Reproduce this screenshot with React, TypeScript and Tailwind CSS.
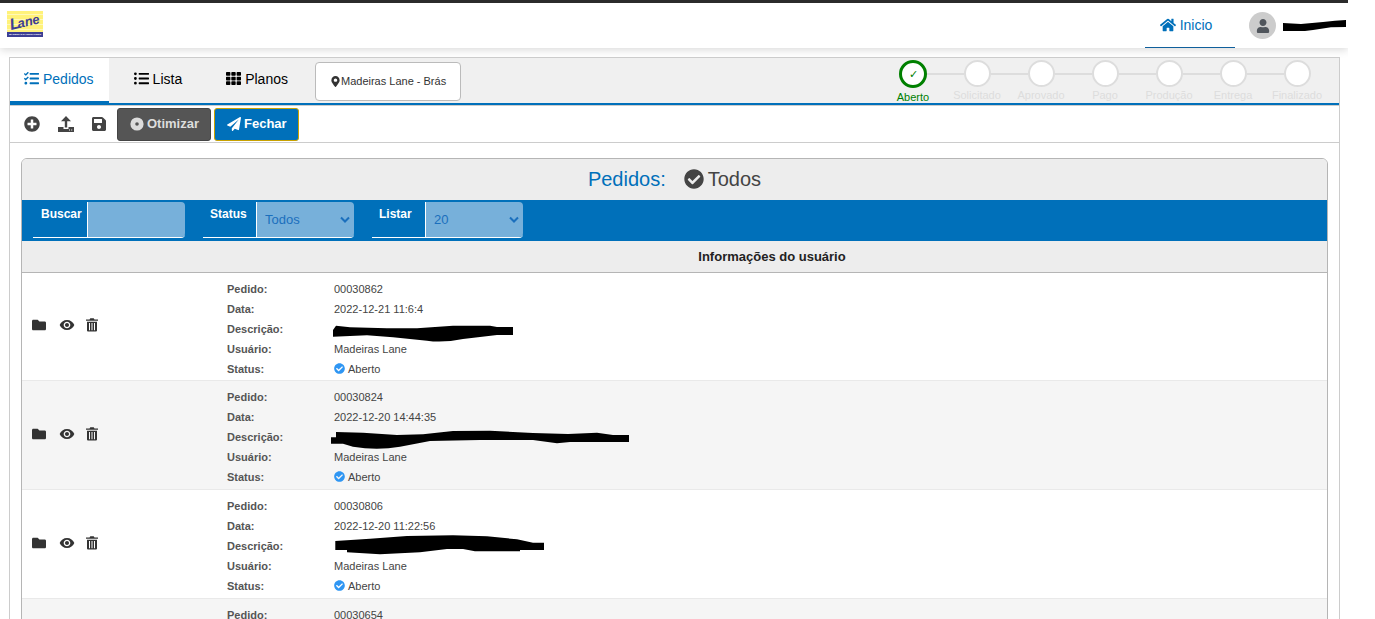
import type { ReactNode } from "react";
import {
  FaCheckCircle,
  FaFolder,
  FaHome,
  FaListUl,
  FaMapMarkerAlt,
  FaPaperPlane,
  FaPlusCircle,
  FaSave,
  FaTasks,
  FaTh,
  FaUser,
} from "react-icons/fa";
import { MdRemoveRedEye } from "react-icons/md";

type Order = {
  id: string;
  date: string;
  user: string;
  status: string;
  // outline of the ink stroke that hides the description
  ink: string;
};

const orders: Order[] = [
  {
    id: "00030862",
    date: "2022-12-21 11:6:4",
    user: "Madeiras Lane",
    status: "Aberto",
    ink: "M-1 11L2 6.7L16 8.3L53 9.3L83 9.3L119 6.7L156 6.7L163 8H179V16H163L129 20Q109 24 93 21.7L59 18.3L33 16.3L-1 17.7Z",
  },
  {
    id: "00030824",
    date: "2022-12-20 14:44:35",
    user: "Madeiras Lane",
    status: "Aberto",
    ink: "M-3 10.3H2V5L29 5.7L63 8L89 7.3L119 4L156 3.7L199 6L234 7L263 5.7L279 8H295V15H236L223 16.3L199 13H146L96 14L66 19.7Q43 24 19 19.7L9 16.7H-3Z",
  },
  {
    id: "00030806",
    date: "2022-12-20 11:22:56",
    user: "Madeiras Lane",
    status: "Aberto",
    ink: "M1.3 14V5L36 2.7L73 0L119 -0.7L153 0.3L183 3.3L199 6.7H210V14H186V15.3H141L129 13H113L86 16.3L46 18.3L13 16.3V14Z",
  },
  {
    id: "00030654",
    date: "2022-12-19 16:20:11",
    user: "Madeiras Lane",
    status: "Aberto",
    ink: "M0 6L60 4L180 6V14L60 17L0 15Z",
  },
];

const steps = ["Aberto", "Solicitado", "Aprovado", "Pago", "Produção", "Entrega", "Finalizado"];

function Logo() {
  return (
    <svg width="36" height="26" viewBox="0 0 36 26" role="img" aria-label="Lane" className="mb-[3px]">
      <rect width="36" height="26" fill="#fff27a" />
      <path d="M0 3.5H36M0 8.5H36M0 13.5H36M0 18.5H36" stroke="#fff9b8" strokeWidth="1" />
      <rect y="21" width="36" height="5" fill="#3d3f94" />
      <text
        x="4"
        y="19"
        transform="rotate(-13 4 19)"
        fill="#3d3f94"
        fontFamily="Liberation Sans Narrow, Liberation Sans, sans-serif"
        fontSize="13"
        fontWeight="700"
        fontStyle="italic"
      >
        <tspan fontSize="16">L</tspan>
        <tspan dx="-2">a</tspan>
        <tspan>ne</tspan>
      </text>
      <text x="2" y="24.4" fill="#fff" fontFamily="Liberation Sans, sans-serif" fontSize="2.5" fontWeight="700">
        MADEIRAS E FERRAGENS
      </text>
    </svg>
  );
}

function UploadIcon() {
  return (
    <svg width="16" height="16" viewBox="0 0 16 16" fill="currentColor" aria-hidden="true">
      <path d="M8 0L13 5.2H9.2V11.5H6.8V5.2H3Z" />
      <path
        fillRule="evenodd"
        d="M0 11H5.5V13H10.5V11H16V16H0ZM11 13.6V14.6H12V13.6ZM13.2 13.6V14.6H14.2V13.6Z"
      />
    </svg>
  );
}

function DiscIcon() {
  return (
    <svg width="14" height="14" viewBox="0 0 14 14" aria-hidden="true">
      <circle cx="7" cy="7" r="6.6" fill="#ddd" />
      <circle cx="7" cy="7" r="1.8" fill="#555" />
    </svg>
  );
}

function TrashIcon() {
  return (
    <svg width="12" height="14" viewBox="0 0 12 14" fill="currentColor" aria-hidden="true">
      <path d="M0 1.5H3.5L4.3 0.3H7.7L8.5 1.5H12V2.8H0Z" />
      <path
        fillRule="evenodd"
        d="M1 3.8H11V12.6Q11 13.6 10 13.6H2Q1 13.6 1 12.6ZM3 5V12.2H4V5ZM5.5 5V12.2H6.5V5ZM8 5V12.2H9V5Z"
      />
    </svg>
  );
}

function Tab({ icon, label, active = false }: { icon: ReactNode; label: string; active?: boolean }) {
  return (
    <button
      className={
        active
          ? "flex h-[47px] items-center gap-1 border-b-4 border-[#0070ba] bg-white pr-[15px] pb-0.5 pl-3.5 text-sm text-[#0070ba]"
          : "flex h-[47px] items-center gap-1 border-b-4 border-transparent px-3.5 pb-0.5 text-sm text-black"
      }
    >
      {icon}
      {label}
    </button>
  );
}

function Stepper() {
  return (
    <ol className="mr-2.5 flex pt-0.5 text-[11px]">
      {steps.map((step, i) => (
        <li key={step} className="w-16">
          <div className="flex items-center">
            <span className={i === 0 ? "h-0.5 flex-1" : "h-0.5 flex-1 bg-[#ddd]"} />
            {i === 0 ? (
              <span className="flex size-7 items-center justify-center rounded-full border-3 border-[#008000] bg-white text-[#008000]">
                ✓
              </span>
            ) : (
              <span className="size-[27px] rounded-full border-2 border-[#ddd] bg-white" />
            )}
            <span className={i === steps.length - 1 ? "h-0.5 flex-1" : "h-0.5 flex-1 bg-[#ddd]"} />
          </div>
          <p className={i === 0 ? "text-center leading-4.5 text-[#008000]" : "text-center leading-4 text-[#ddd]"}>
            {step}
          </p>
        </li>
      ))}
    </ol>
  );
}

function FilterSelect({ id, label, value }: { id: string; label: string; value: string }) {
  return (
    <div className="flex h-9 w-[151px] rounded-r border-b border-white">
      <label htmlFor={id} className="w-[53px] pl-[7px] text-xs leading-6 font-bold text-white">
        {label}
      </label>
      <div className="relative flex-1">
        <select
          id={id}
          defaultValue={value}
          className="h-full w-full appearance-none rounded-r border-l border-white bg-[#77b0da] pl-2 text-[13px] text-[#1b6fbd]"
        >
          <option>{value}</option>
        </select>
        <svg
          className="pointer-events-none absolute top-3.5 right-1"
          width="10"
          height="8"
          viewBox="0 0 10 8"
          fill="none"
          stroke="#1b6fbd"
          strokeWidth="2"
          aria-hidden="true"
        >
          <path d="M1 1.5L5 5.5L9 1.5" />
        </svg>
      </div>
    </div>
  );
}

function OrderRow({ order, index }: { order: Order; index: number }) {
  return (
    <tr className={index % 2 === 0 ? "border-b border-[#e9e9e9] bg-white" : "border-b border-[#e9e9e9] bg-[#f5f5f5]"}>
      <td className="pb-0.5 pl-2.5 align-middle text-[#333]">
        <div className="flex items-center">
          <button aria-label="Abrir" className="w-[27px]">
            <FaFolder size={14} />
          </button>
          <button aria-label="Visualizar" className="w-[27px]">
            <MdRemoveRedEye size={16} />
          </button>
          <button aria-label="Excluir">
            <TrashIcon />
          </button>
        </div>
      </td>
      <td className={index === 0 ? "pt-1.5 pb-px pl-2.5" : "pt-1.5 pb-0.5 pl-2.5"}>
        <dl className="grid grid-cols-[107px_1fr] text-[11px] leading-5 text-[#444]">
          <dt className="font-bold text-[#555]">Pedido:</dt>
          <dd>{order.id}</dd>
          <dt className="font-bold text-[#555]">Data:</dt>
          <dd>{order.date}</dd>
          <dt className="font-bold text-[#555]">Descrição:</dt>
          <dd>
            <svg width="300" height="20" viewBox="0 0 300 20" className="overflow-visible" aria-hidden="true">
              <path d={order.ink} fill="#000" />
            </svg>
          </dd>
          <dt className="font-bold text-[#555]">Usuário:</dt>
          <dd>{order.user}</dd>
          <dt className="font-bold text-[#555]">Status:</dt>
          <dd className="flex items-center gap-[3px]">
            <FaCheckCircle size={11} color="#2f96f3" />
            {order.status}
          </dd>
        </dl>
      </td>
    </tr>
  );
}

export default function App() {
  return (
    <div className="min-h-screen bg-white pr-[27px] font-['Liberation_Sans',Arial,sans-serif] text-[#444]">
      <div className="overflow-hidden">
        <header className="flex h-12 items-center justify-between border-t-3 border-[#2b2b2b] bg-white pl-[7px] shadow-[0_2px_8px_rgba(0,0,0,0.15)]">
          <Logo />
          <div className="flex h-full items-center">
            <a
              href="#inicio"
              className="flex h-full w-[90px] items-center justify-center gap-1 border-b border-[#0f5f9c] pr-2 text-sm text-[#0070ba]"
            >
              <FaHome size={16} />
              Inicio
            </a>
            <span className="mr-[7px] ml-3.5 flex size-[27px] items-center justify-center rounded-full bg-[#ccc] text-[#50555c]">
              <FaUser size={14} />
            </span>
            <svg width="65" height="12" viewBox="0 0 65 12" aria-hidden="true">
              <path d="M0 3L18 4L40 2L52 0.7L63 0V7L48 7.3L30 10L22 11H0Z" fill="#000" />
            </svg>
          </div>
        </header>

        <main className="mt-[9px] mr-2 ml-[9px] border border-[#ccc]">
          <nav className="flex h-12 items-start justify-between border-b border-[#ccc] bg-[#f0f0f0] bg-[linear-gradient(#0070ba,#0070ba)] bg-[length:100%_2px] bg-bottom bg-no-repeat">
            <div className="flex items-start">
              <Tab active icon={<FaTasks size={15} />} label="Pedidos" />
              <div className="ml-[11px] flex">
                <Tab icon={<FaListUl size={15} />} label="Lista" />
              </div>
              <div className="ml-4 flex">
                <Tab icon={<FaTh size={15} />} label="Planos" />
              </div>
              <button className="mt-1 ml-[13px] flex h-[39px] items-center rounded border border-[#bbb] bg-white px-3.5 text-[11px] text-[#333]">
                <FaMapMarkerAlt size={11} />
                Madeiras Lane - Brás
              </button>
            </div>
            <Stepper />
          </nav>

          <div className="flex h-[37px] items-center border-b border-[#ccc] pl-3.5">
            <button aria-label="Novo" className="w-[34px]">
              <FaPlusCircle size={16} />
            </button>
            <button aria-label="Enviar" className="w-[33px]">
              <UploadIcon />
            </button>
            <button aria-label="Salvar" className="w-[26px]">
              <FaSave size={16} />
            </button>
            <button className="mr-[3px] flex h-[33px] items-center gap-[3px] rounded-[3px] border border-[#444] bg-[#555] pr-[11px] pl-3 text-[13px] font-bold text-[#ddd]">
              <DiscIcon />
              Otimizar
            </button>
            <button className="flex h-[33px] items-center gap-[3px] rounded-[3px] border border-[#c9a200] bg-[#0070ba] pr-[11px] pl-3 text-[13px] font-bold text-white">
              <FaPaperPlane size={14} />
              Fechar
            </button>
          </div>

          <section className="mx-[11px] mt-[15px] overflow-hidden rounded-t-md border border-[#b5b5b5]">
            <h1 className="flex h-[41px] items-center justify-center bg-[#ededed] pb-0.5 text-xl">
              <span className="mr-[18px] text-[#0070ba]">Pedidos:</span>
              <FaCheckCircle size={20} className="mr-1" />
              Todos
            </h1>

            <form className="flex h-[41px] gap-[18px] bg-[#0070ba] pt-0.5 pl-[11px]">
              <div className="flex h-9 w-[152px] rounded-r border-b border-white">
                <label htmlFor="buscar" className="w-[54px] pl-2 text-xs leading-6 font-bold text-white">
                  Buscar
                </label>
                <input
                  id="buscar"
                  type="text"
                  className="h-full w-[98px] rounded-r border-l border-white bg-[#77b0da] px-2 text-[13px] text-[#1b6fbd]"
                />
              </div>
              <FilterSelect id="status" label="Status" value="Todos" />
              <FilterSelect id="listar" label="Listar" value="20" />
            </form>

            <table className="w-full table-fixed border-collapse">
              <thead>
                <tr className="h-[31px] border-b border-[#b5b5b5] bg-[#ededed]">
                  <th className="w-[195px]" aria-label="Ações" />
                  <th className="text-[13px] font-bold text-[#222]">Informações do usuário</th>
                </tr>
              </thead>
              <tbody>
                {orders.map((order, index) => (
                  <OrderRow key={order.id} order={order} index={index} />
                ))}
              </tbody>
            </table>
          </section>
        </main>
      </div>
    </div>
  );
}
